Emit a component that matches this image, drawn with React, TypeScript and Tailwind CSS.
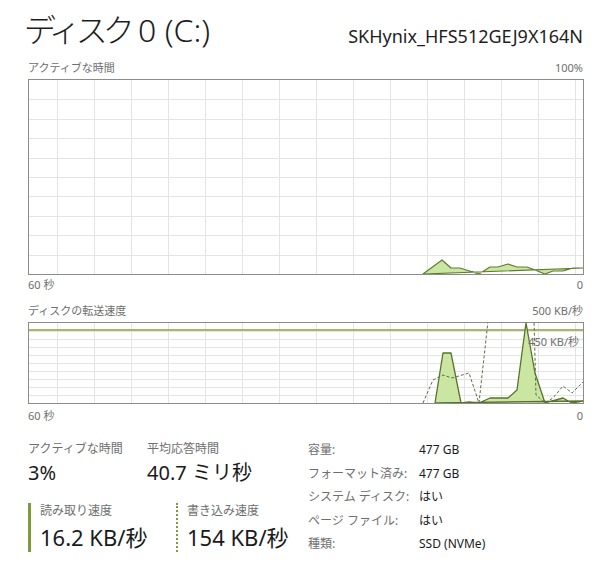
import React from "react";

const FONT = { fontFamily: '"Noto Sans", "Noto Sans CJK JP", sans-serif' };

const activity: [number, number][] = [
  [394, 194], [413, 180], [422, 188], [431, 188], [450, 194], [461, 187],
  [469, 187], [479, 184], [488, 187], [498, 187], [506, 190], [516, 194],
  [524, 191], [534, 191], [544, 188], [554, 188],
];

const readRate: [number, number][] = [
  [406, 80], [414, 30], [422, 30], [432, 80], [440, 79], [450, 80],
  [461, 75], [479, 75], [488, 67], [497, 0], [506, 50], [516, 80],
  [534, 75], [543, 80], [554, 78],
];

const writeRate: [number, number][] = [
  [394, 80], [404, 57], [414, 52], [423, 55], [440, 50], [450, 80],
  [459, -2], [466, -60], [500, -60], [505, -2], [507, 72], [516, 80],
  [524, 75], [534, 63], [543, 70], [554, 59],
];

const pts = (p: [number, number][]) => p.map(([x, y]) => `${x},${y}`).join(" ");

function Grid({ w, h, rows }: { w: number; h: number; rows: number }) {
  const cols = Array.from({ length: 15 }, (_, i) => 28 + i * 37);
  const lines = Array.from({ length: rows - 1 }, (_, i) => ((i + 1) * h) / rows);
  return (
    <g stroke="#e4e4e4" strokeWidth="1" shapeRendering="crispEdges">
      {cols.map((x) => (
        <line key={`v${x}`} x1={x + 0.5} y1={0} x2={x + 0.5} y2={h} />
      ))}
      {lines.map((y) => (
        <line key={`h${y}`} x1={0} y1={Math.round(y) + 0.5} x2={w} y2={Math.round(y) + 0.5} />
      ))}
    </g>
  );
}

function AxisRow({ left, right, className }: { left: string; right: string; className?: string }) {
  return (
    <div className={`flex justify-between pl-[28px] pr-[17px] text-[11px] leading-[14px] text-[#6e6e6e] ${className ?? ""}`}>
      <span>{left}</span>
      <span>{right}</span>
    </div>
  );
}

function Stat({ label, value }: { label: string; value: string }) {
  return (
    <div className="flex flex-col">
      <span className="text-[12px] leading-[16px] text-[#6e6e6e]">{label}</span>
      <span className="mt-[3px] text-[20px] leading-[26px] text-[#1a1a1a]">{value}</span>
    </div>
  );
}

const props: [string, string][] = [
  ["容量:", "477 GB"],
  ["フォーマット済み:", "477 GB"],
  ["システム ディスク:", "はい"],
  ["ページ ファイル:", "はい"],
  ["種類:", "SSD (NVMe)"],
];

export default function App() {
  return (
    <div className="h-[568px] w-[600px] overflow-hidden bg-white" style={FONT}>
      <div className="flex items-end justify-between pl-[24px] pr-[17px] pt-[9px]">
        <h1 className="text-[32px] font-light leading-[42px] text-[#1e1e1e]">
          <span className="tracking-[-5px]">ディスク</span> 0 (C:)
        </h1>
        <span className="pb-[3px] text-[18px] leading-[24px] text-[#1e1e1e]">SKHynix_HFS512GEJ9X164N</span>
      </div>

      <AxisRow left="アクティブな時間" right="100%" className="mt-[10px]" />
      <div className="ml-[28px] mt-[4px] h-[196px] w-[556px] border border-[#8c8c8c]">
        <svg width="554" height="194" className="block">
          <Grid w={554} h={194} rows={10} />
          <polygon points={pts(activity)} fill="#cbe6a3" stroke="#5e7d2c" strokeWidth="1.2" strokeLinejoin="round" />
        </svg>
      </div>
      <AxisRow left="60 秒" right="0" className="mt-[3px]" />

      <AxisRow left="ディスクの転送速度" right="500 KB/秒" className="mt-[12px]" />
      <div className="relative ml-[28px] mt-[4px] h-[82px] w-[556px] border border-[#8c8c8c]">
        <svg width="554" height="80" className="block">
          <Grid w={554} h={80} rows={10} />
          <line x1="0" y1="7" x2="554" y2="7" stroke="#8aa03e" strokeWidth="1.5" />
          <polygon points={pts(readRate)} fill="#cbe6a3" stroke="#56742a" strokeWidth="1.3" strokeLinejoin="round" />
          <polyline points={pts(writeRate)} fill="none" stroke="#5e6b44" strokeWidth="1" strokeDasharray="3 2" />
        </svg>
        <span className="absolute right-[4px] top-[12px] text-[11px] leading-[14px] text-[#6e6e6e]">450 KB/秒</span>
      </div>
      <AxisRow left="60 秒" right="0" className="mt-[5px]" />

      <div className="mt-[18px] flex pl-[28px]">
        <div className="w-[280px]">
          <div className="flex">
            <div className="w-[119px]">
              <Stat label="アクティブな時間" value="3%" />
            </div>
            <Stat label="平均応答時間" value="40.7 ミリ秒" />
          </div>
          <div className="mt-[17px] flex">
            <div className="w-[148px] border-l-[3px] border-[#7f9a3c] pl-[9px]">
              <span className="block text-[12px] leading-[16px] text-[#6e6e6e]">読み取り速度</span>
              <span className="mt-[3px] block text-[22px] leading-[30px] text-[#1a1a1a]">16.2 KB/秒</span>
            </div>
            <div className="border-l-2 border-dotted border-[#7f9a3c] pl-[9px]">
              <span className="block text-[12px] leading-[16px] text-[#6e6e6e]">書き込み速度</span>
              <span className="mt-[3px] block text-[22px] leading-[30px] text-[#1a1a1a]">154 KB/秒</span>
            </div>
          </div>
        </div>
        <div className="grid grid-cols-[111px_auto] gap-y-[5.5px] text-[12px] leading-[18px]">
          {props.map(([k, v]) => (
            <React.Fragment key={k}>
              <span className="text-[#6e6e6e]">{k}</span>
              <span className="text-[#1a1a1a]">{v}</span>
            </React.Fragment>
          ))}
        </div>
      </div>
    </div>
  );
}
